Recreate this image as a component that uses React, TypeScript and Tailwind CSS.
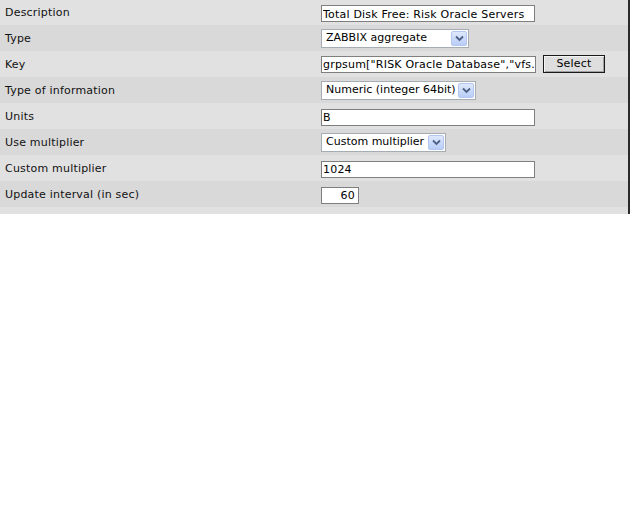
import React from "react";

const font = { fontFamily: '"DejaVu Sans", Verdana, sans-serif', letterSpacing: "0.2px" };

const Arrow = () => (
  <span className="ml-auto mr-[1px] flex h-[15px] w-[16px] shrink-0 items-center justify-center rounded-[2px] border border-[#b3c6ef] bg-gradient-to-b from-[#dfe8fc] to-[#b8cdf7]">
    <svg width="9" height="7" viewBox="0 0 9 7">
      <path d="M1 1.5 L4.5 5 L8 1.5" fill="none" stroke="#4d6185" strokeWidth="1.8" />
    </svg>
  </span>
);

const FakeSelect = ({ value, width }: { value: string; width: string }) => (
  <div className={`flex h-[19px] items-center border border-[#a5acb2] bg-white pl-[4px] ${width}`}>
    <span className="whitespace-nowrap pt-[1px] text-[11px] tracking-normal text-black">{value}</span>
    <Arrow />
  </div>
);

const TextBox = ({ value, width, right }: { value: string; width: string; right?: boolean }) => (
  <input
    readOnly
    value={value}
    style={font}
    className={`h-[17px] border border-[#7f7f7f] bg-white px-[1px] pt-[1px] text-[11px] text-black outline-none ${width} ${right ? "text-right pr-[3px]" : ""}`}
  />
);

type Row = { label: string; field: React.ReactNode };

const rows: Row[] = [
  { label: "Description", field: <TextBox value="Total Disk Free: Risk Oracle Servers" width="w-[214px]" /> },
  { label: "Type", field: <FakeSelect value="ZABBIX aggregate" width="w-[148px]" /> },
  {
    label: "Key",
    field: (
      <div className="flex items-center gap-[7px]">
        <TextBox value={'grpsum["RISK Oracle Database","vfs.fs.size[/,free]","last","0"]'} width="w-[215px]" />
        <button
          style={font}
          className="h-[18px] w-[62px] border border-[#1a1a1a] bg-[#dedede] text-[11px] text-black shadow-[inset_1px_1px_0_#f4f4f4,inset_-1px_-1px_0_#a0a0a0]"
        >
          Select
        </button>
      </div>
    ),
  },
  { label: "Type of information", field: <FakeSelect value="Numeric (integer 64bit)" width="w-[155px]" /> },
  { label: "Units", field: <TextBox value="B" width="w-[214px]" /> },
  { label: "Use multiplier", field: <FakeSelect value="Custom multiplier" width="w-[125px]" /> },
  { label: "Custom multiplier", field: <TextBox value="1024" width="w-[214px]" /> },
  { label: "Update interval (in sec)", field: <TextBox value="60" width="w-[38px]" right /> },
];

export default function App() {
  return (
    <div className="h-[512px] w-[640px] bg-white" style={font}>
      <div className="w-[630px] border-r-2 border-[#2b2b2b]">
        {rows.map((r, i) => (
          <div
            key={r.label}
            className={`grid grid-cols-[316px_1fr] items-center ${i === 0 ? "h-[25px]" : "h-[26px]"} ${
              i % 2 === 0 ? "bg-[#e1e1e1]" : "bg-[#d9d9d9]"
            }`}
          >
            <div className="pl-[5px] pt-[2px] text-[11px] text-[#111]">{r.label}</div>
            <div className="pl-[5px]">{r.field}</div>
          </div>
        ))}
        <div className="h-[7px] bg-[#e1e1e1]" />
      </div>
    </div>
  );
}
